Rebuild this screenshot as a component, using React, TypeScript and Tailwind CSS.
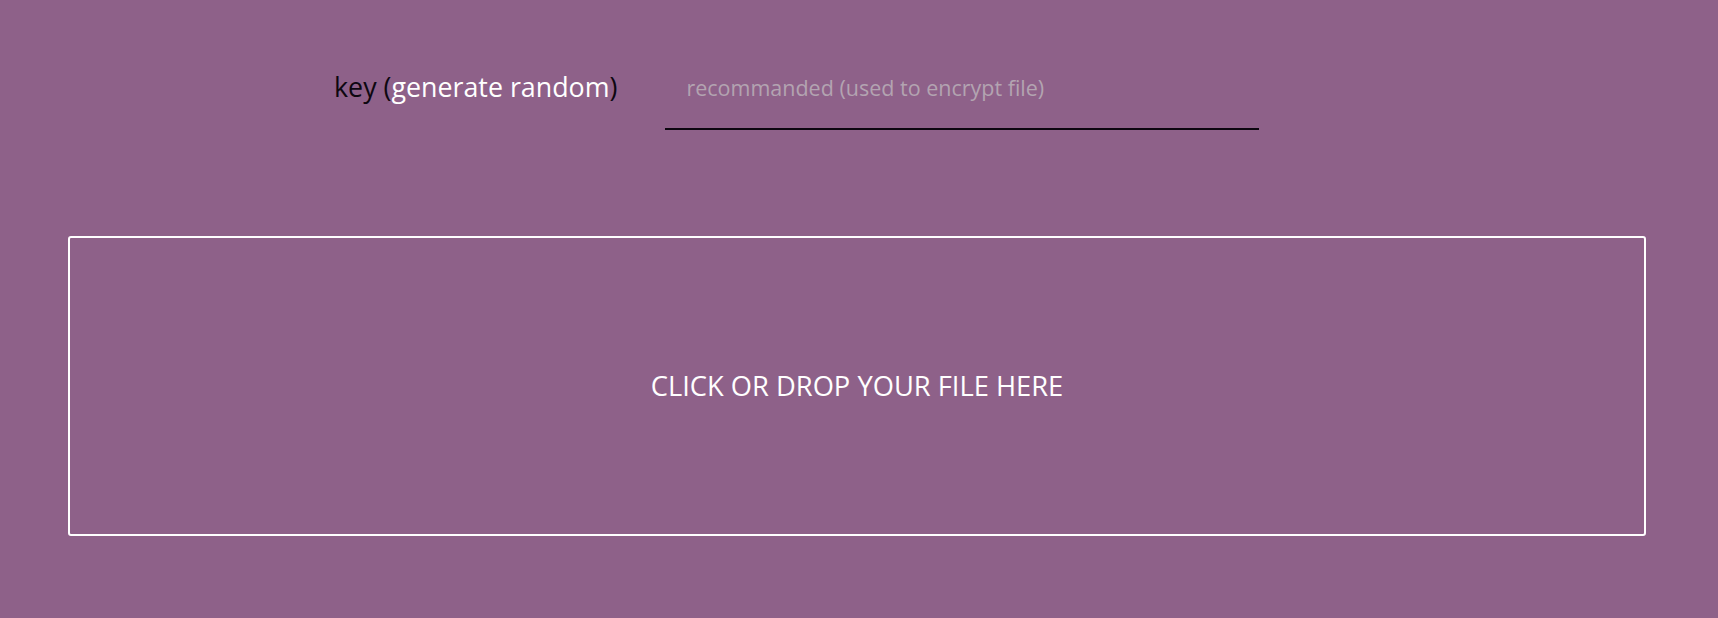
export default function App() {
  return (
    <div className="min-h-[618px] w-full bg-[#8e6189] font-['Open_Sans',sans-serif] pt-[48px]">
      <div className="flex items-center pl-[334px]">
        <label className="pb-[4px] text-[26.8px] text-[#0d0710] leading-none whitespace-nowrap">
          key (<span className="text-white">generate random</span>)
        </label>
        <input
          type="text"
          placeholder="recommanded (used to encrypt file)"
          className="ml-[48px] h-[82px] w-[594px] border-b-2 border-[#0d0710] bg-transparent pb-[2px] px-[21px] text-[21.5px] text-white outline-none placeholder:text-[#b3a4b1]"
        />
      </div>
      <div className="ml-[68px] mr-[72px] mt-[106px] flex h-[300px] items-center justify-center rounded-[3px] border-2 border-white">
        <p className="text-[27.3px] uppercase text-white">Click or drop your file here</p>
      </div>
    </div>
  );
}
